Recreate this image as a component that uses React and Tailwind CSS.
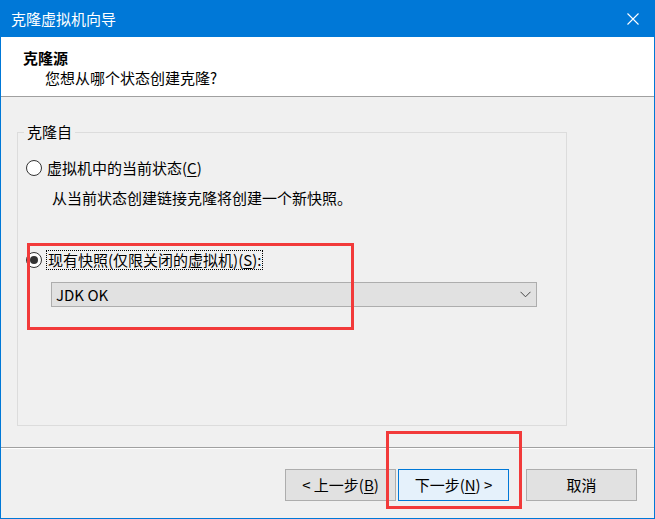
import React from "react";

const font = { fontFamily: '"Noto Sans CJK SC", "Noto Sans", sans-serif' };

const Radio = ({ checked }) => (
  <span className="w-[16px] h-[16px] rounded-full border border-[#333333] bg-white flex items-center justify-center shrink-0">
    {checked && <span className="w-[8px] h-[8px] rounded-full bg-[#333333]" />}
  </span>
);

const Key = ({ children }) => <span className="underline underline-offset-2">{children}</span>;

const Button = ({ children, primary }) => (
  <button
    className={
      primary
        ? "w-[111px] h-[32px] border border-[#0078d7] bg-[#e5f1fb] text-[15px] leading-[20px] text-black"
        : "w-[111px] h-[32px] border border-[#adadad] bg-[#e1e1e1] text-[15px] leading-[20px] text-black"
    }
  >
    {children}
  </button>
);

export default function App() {
  return (
    <div className="relative w-[655px] h-[519px] flex flex-col overflow-hidden text-black" style={font}>
      {/* title bar */}
      <div className="h-[37px] shrink-0 bg-[#0078d7] flex items-center justify-between pl-[11px] pr-[16px]">
        <span className="text-white text-[15px] leading-[20px]">克隆虚拟机向导</span>
        <svg width="12" height="12" viewBox="0 0 12 12">
          <path d="M0.5 0.5 L11.5 11.5 M11.5 0.5 L0.5 11.5" stroke="#ffffff" strokeWidth="1.1" fill="none" />
        </svg>
      </div>

      <div className="flex-1 flex flex-col border-x border-b border-[#0078d7] bg-[#f0f0f0]">
        {/* header */}
        <div className="h-[60px] shrink-0 bg-white border-b border-[#a0a0a0] pl-[22px] pt-[11px]">
          <div className="text-[15px] leading-[20px] font-bold">克隆源</div>
          <div className="text-[15px] leading-[20px] pl-[22px]">您想从哪个状态创建克隆?</div>
        </div>

        {/* body */}
        <div className="pt-[35px] pl-[16px]">
          <div className="w-[550px] h-[294px] border border-[#dcdcdc] flex flex-col">
            <span className="self-start -mt-[11px] ml-[6px] px-[3px] bg-[#f0f0f0] text-[15px] leading-[20px]">
              克隆自
            </span>

            <div className="mt-[16px] flex items-center h-[20px] pl-[8px]">
              <Radio />
              <span className="ml-[5px] text-[15px] leading-[20px]">
                虚拟机中的当前状态(<Key>C</Key>)
              </span>
            </div>

            <div className="mt-[10px] pl-[34px] text-[15px] leading-[20px]">
              从当前状态创建链接克隆将创建一个新快照。
            </div>

            <div className="mt-[42px] flex items-center h-[20px] pl-[8px]">
              <Radio checked />
              <span className="ml-[4px] px-[1px] border border-dotted border-black text-[15px] leading-[18px]">
                现有快照(仅限关闭的虚拟机)(<Key>S</Key>):
              </span>
            </div>

            <div className="mt-[12px] ml-[33px] w-[486px] h-[25px] border border-[#adadad] bg-[#e1e1e1] flex items-center justify-between pl-[4px] pr-[5px]">
              <span className="text-[15px] leading-[20px]">JDK OK</span>
              <svg width="11" height="7" viewBox="0 0 11 7">
                <path d="M0.5 0.8 L5.5 5.8 L10.5 0.8" stroke="#444444" strokeWidth="1" fill="none" />
              </svg>
            </div>
          </div>
        </div>

        {/* separator */}
        <div className="mt-[21px] h-[2px] border-t border-[#a0a0a0] border-b border-b-white" />

        {/* buttons */}
        <div className="mt-[20px] flex justify-end pr-[17px]">
          <Button>
            &lt; 上一步(<Key>B</Key>)
          </Button>
          <div className="ml-[2px]">
            <Button primary>
              下一步(<Key>N</Key>) &gt;
            </Button>
          </div>
          <div className="ml-[17px]">
            <Button>取消</Button>
          </div>
        </div>
      </div>

      {/* red annotation boxes */}
      <div className="absolute left-[27px] top-[243px] w-[327px] h-[87px] border-[3px] border-[#f23a3a] pointer-events-none" />
      <div className="absolute left-[386px] top-[431px] w-[136px] h-[78px] border-[3px] border-[#f23a3a] pointer-events-none" />
    </div>
  );
}
